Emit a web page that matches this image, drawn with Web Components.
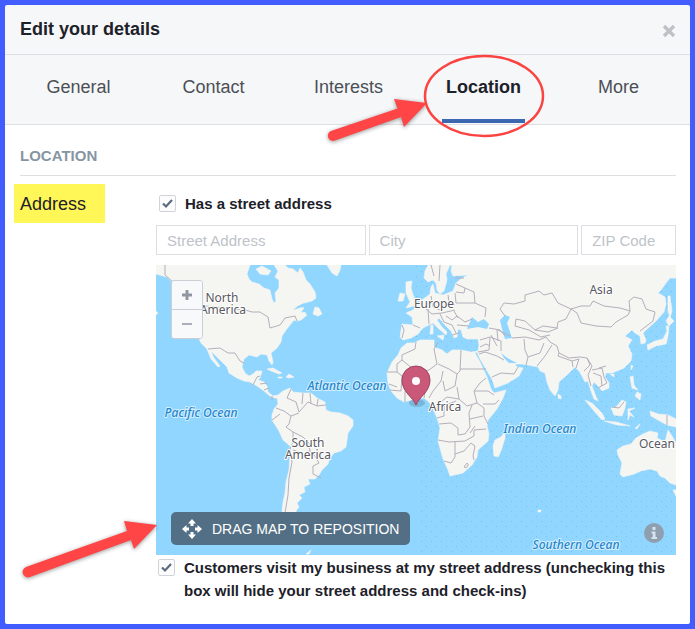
<!DOCTYPE html>
<html lang="en">
<head>
<meta charset="utf-8">
<title>Edit your details</title>
<style>
  html, body { height: 100%; }
  body { margin: 0; background: #425dff; font-family: "Liberation Sans", Arial, sans-serif; color: #1d2129; }
</style>
</head>
<body>
<details-dialog heading="Edit your details">
  <tab-bar slot="tabs">
    <tab-item>General</tab-item>
    <tab-item>Contact</tab-item>
    <tab-item>Interests</tab-item>
    <tab-item active>Location</tab-item>
    <tab-item>More</tab-item>
  </tab-bar>
  <form-section heading="LOCATION">
    <span slot="label">Address</span>
    <check-field>Has a street address</check-field>
    <address-fields></address-fields>
    <world-map></world-map>
    <check-field class="visit">Customers visit my business at my street address (unchecking this box will hide your street address and check-ins)</check-field>
  </form-section>
  <callout-marks slot="marks"></callout-marks>
</details-dialog>

<script>
const define = (name, markup, setup) => {
  const template = document.createElement('template');
  template.innerHTML = markup;
  customElements.define(name, class extends HTMLElement {
    constructor() {
      super();
      this.attachShadow({ mode: 'open' }).append(template.content.cloneNode(true));
    }
    connectedCallback() { if (setup) setup(this, this.shadowRoot); }
  });
};

define('details-dialog', `
<style>
  :host { display: flex; flex-direction: column; box-sizing: border-box; position: relative; min-height: 100%; padding: 5px; }
  header { display: flex; align-items: center; justify-content: space-between; box-sizing: border-box; height: 50px; padding: 0 14px 2px 15px; background: #f6f7f8; border-bottom: 1px solid #dddfe2; border-radius: 2px 2px 0 0; }
  h1 { margin: 0; font-size: 18px; line-height: 22px; font-weight: bold; color: #1d2129; }
  button { display: flex; border: 0; padding: 4px 0 0; background: none; }
  main { flex: 1; background: #fff; border-radius: 0 0 2px 2px; }
</style>
<header><h1></h1>
  <button type="button" aria-label="Close"><svg width="14" height="14" viewBox="0 0 14 14"><path d="M2 2L12 12M12 2L2 12" stroke="#bfc1c7" stroke-width="3.4"/></svg></button>
</header>
<slot name="tabs"></slot>
<main><slot></slot></main>
<slot name="marks"></slot>`,
(host, root) => { root.querySelector('h1').textContent = host.getAttribute('heading'); });

define('tab-bar', `
<style>
  :host { display: block; background: #f6f7f8; border-bottom: 1px solid #dddfe2; }
  nav { display: grid; grid-template-columns: repeat(5, 1fr); padding: 0 4px 0 6px; height: 69px; }
</style>
<nav><slot></slot></nav>`);

define('tab-item', `
<style>
  :host { display: flex; justify-content: center; }
  button { box-sizing: border-box; border: 0; border-bottom: 4px solid transparent; margin-bottom: 1px; padding: 0 4px; background: none; font: 18px/20px "Liberation Sans", Arial, sans-serif; color: #4b4f56; }
  :host([active]) button { border-color: #3b66b0; font-weight: bold; color: #1d2129; }
</style>
<button type="button"><slot></slot></button>`);

define('form-section', `
<style>
  :host { display: block; padding: 20px 14px 16px 9px; }
  h2 { margin: 0 0 8px 6px; padding-bottom: 8px; border-bottom: 1px solid #dddfe2; font-size: 15px; line-height: 22px; font-weight: bold; color: #8795a3; }
  .row { display: grid; grid-template-columns: 142px minmax(0, 1fr); align-items: start; }
  .name { justify-self: start; box-sizing: border-box; width: 91px; padding: 2px 6px 0; background: #fff657; font-size: 18px; line-height: 37px; }
</style>
<h2></h2>
<div class="row"><div class="name"><slot name="label"></slot></div><div><slot></slot></div></div>`,
(host, root) => { root.querySelector('h2').textContent = host.getAttribute('heading'); });

define('check-field', `
<style>
  :host { display: block; padding: 8px 0 10px; }
  :host(.visit) { padding: 1px 0 0; }
  label { display: flex; align-items: flex-start; gap: 9px; padding: 0 0 0 3px; font-size: 15px; line-height: 23px; font-weight: bold; color: #1d2129; }
  :host(.visit) label { padding-left: 2px; }
  input { appearance: none; flex: none; box-sizing: border-box; width: 17px; height: 17px; margin: 3px 0 0; border: 1px solid #d0d3d9; border-radius: 2px; background: #fcfcfd; }
  .box { display: grid; }
  .box > * { grid-area: 1 / 1; }
  svg { margin: 3px 0 0; display: block; pointer-events: none; z-index: 1; }
  input:not(:checked) + svg { visibility: hidden; }
</style>
<label><span class="box"><input type="checkbox" checked><svg width="17" height="17" viewBox="0 0 17 17"><path d="M4 8.5L7 11.5L13 5" fill="none" stroke="#5a6b7b" stroke-width="2.2"/></svg></span><span><slot></slot></span></label>`);

define('address-fields', `
<style>
  :host { display: grid; grid-template-columns: 210fr 210fr 95fr; gap: 3px; padding-bottom: 10px; }
  input { box-sizing: border-box; min-width: 0; width: 100%; height: 30px; border: 1px solid #dddfe2; border-radius: 0; padding: 0 10px; background: #fff; font: 15px "Liberation Sans", Arial, sans-serif; color: #1d2129; }
  input::placeholder { color: #bec3c9; opacity: 1; }
</style>
<input aria-label="Street Address" placeholder="Street Address">
<input aria-label="City" placeholder="City">
<input aria-label="ZIP Code" placeholder="ZIP Code">`);

define('world-map', `
<style>
  :host { display: block; position: relative; background: #91d6ff; }
  .map { display: block; width: 100%; height: auto; }
  .land { fill: #f5f5f2; stroke: #f5f5f2; stroke-width: .6; stroke-linejoin: round; }
  .sea { fill: #91d6ff; }
  .border { fill: none; stroke: #b5afbb; stroke-width: 1; stroke-linejoin: round; }
  text { text-anchor: middle; paint-order: stroke; stroke-linejoin: round; font-family: "Noto Sans", sans-serif; font-size: 12px; }
  .place { fill: #585860; stroke: #fff; stroke-width: 2px; }
  .ocean { fill: #2486cc; stroke: #d5efff; stroke-width: 2px; font-family: "Open Sans", "Noto Sans", sans-serif; font-style: italic; font-weight: 500; }
  .zoom { position: absolute; left: 15px; top: 15px; display: grid; width: 32px; box-sizing: border-box; border: 1px solid #cbced5; border-radius: 3px; overflow: hidden; }
  .zoom button { display: grid; place-items: center; height: 28px; border: 0; padding: 0; background: #f8f9fb; }
  .zoom button + button { box-sizing: content-box; border-top: 1px solid #cbced5; }
  .drag { position: absolute; left: 15px; bottom: 10px; display: flex; align-items: center; gap: 10px; height: 33px; border: 0; border-radius: 5px; padding: 0 11px; background: #526f85; font: 14px "Liberation Sans", Arial, sans-serif; color: #fff; white-space: nowrap; }
  .info { position: absolute; right: 12px; bottom: 12px; display: flex; border: 0; padding: 0; background: none; }
</style>
<svg class="map" viewBox="156 265 520 290" role="img" aria-label="World map">
  <defs><pattern id="dots" width="10" height="10" patternUnits="userSpaceOnUse"><rect x="1" y="1" width="1" height="1" fill="#76c0ee"/><rect x="6" y="6" width="1" height="1" fill="#76c0ee"/></pattern></defs>
  <rect class="sea" x="156" y="265" width="520" height="290"/>
  <path fill="url(#dots)" d="M412 265H676V555H418V405Z"/>
  <g class="land">
    <path d="M156 265H250L247 274 249 279 252 282 259 284 264 288 270 290 272 299 274 303 276 301 275 293 279 288 279 280 275 277 278 271 274 265H285L288 268 293 269 298 273 300 268 303 272 306 280 310 284 315 292 316 298 312 301 304 303 300 307 304 308 301 312 307 315 301 320 297 321 294 320 290 325 286 330 282 336 281 342 277 348 271 353 273 362 272 365 269 361 267 355 261 354 257 357 249 355 244 359 242 367 245 373 249 376 253 374 256 371 262 371 260 378 258 380 264 382 267 386 268 392 273 396 278 395 280 398 275 398 270 396 264 391 257 386 250 382 244 381 237 378 229 373 227 367 219 359 213 353 211 351 214 358 220 366 218 367 211 359 207 349 201 343 198 336 197 322 198 312 192 301 182 290 176 282 171 281 167 277 163 276 156 274Z"/>
    <path d="M313 314L315 307 319 308 322 314 318 316ZM303 312L306 313 302 318ZM327 265H341L340 270 337 276 332 273ZM256 269L262 266 271 271 268 275 260 274ZM267 369L273 368 282 373 279 374 271 371ZM286 377L289 374 294 377 289 378ZM278 377H282V378H278ZM156 311L158 313 156 315Z"/>
    <path d="M277 396L283 391 290 388 293 392 303 393 311 393 317 398 325 402 326 410 331 412 340 413 348 416 353 420 353 426 348 433 346 447 341 451 334 453 330 458 328 464 322 470 319 475 315 479 308 479 310 484 304 487 305 492 299 495 302 498 297 503 299 507 296 511 297 519 301 526 293 527 285 520 282 512 283 502 285 493 286 482 289 470 290 456 290 446 283 440 279 431 272 420 272 415 274 409 278 404Z"/>
    <path d="M428 265L425 271 424 278 428 282 433 280 436 283 437 290 440 294 444 291 446 284 447 279 446 274 450 265H676V278L670 278 666 283 661 290 658 293 665 297 666 304 664 312 656 321 646 330 643 333 646 340 645 343 641 344 640 336 635 333 632 330 625 336 632 340 628 346 632 354 631 361 624 368 617 371 612 373 606 373 605 377 609 383 609 388 602 391 599 387 594 382 592 386 595 394 598 401 594 399 591 391 588 381 585 382 582 376 579 371 575 367 568 374 559 382 558 390 555 396 550 390 547 382 545 373 540 371 538 367 528 365 522 364 515 364 517 367 523 368 519 376 508 383 495 388 492 379 487 371 480 359 477 352 475 353 480 362 487 377 491 389 494 393 506 390 503 398 497 409 488 420 487 426 489 434 488 441 478 450 477 457 472 465 463 473 450 476 448 470 443 459 438 441 440 428 437 418 433 409 429 402 424 398 415 399 404 402 397 398 391 391 388 383 387 373 392 362 398 355 401 348 407 343 414 343 420 340 434 340 434 347 442 350 447 354 452 350 461 350 471 352 478 351 479 345 478 339 467 339 463 337 461 330 458 329 457 337 454 338 451 331 445 325 439 318 437 320 442 327 447 332 446 335 439 329 433 323 423 328 418 334 411 338 403 340 400 337 402 324 413 325 412 317 406 313 413 310 419 302 426 297 430 294 431 287 433 284 435 293 443 295 453 291 456 283 462 278 468 275 453 276 451 271 452 265Z"/>
    <path d="M406 282L412 281 411 288 413 295 417 303 414 306 406 308 410 302 406 293ZM400 293L405 294 403 301 398 301ZM437 336L444 335 443 340ZM431 325H433V334H430Z"/>
    <path d="M505 432L505 438 501 451 498 457 494 456 493 446 495 440 501 437ZM558 394L561 396 561 399 558 398ZM617 450L623 446 631 444 636 438 643 434 650 431 658 433 657 438 665 442 668 430 672 436 676 443V485L670 483 665 478 660 476 657 471 650 469 641 471 634 474 623 477 620 474 622 463 618 455ZM673 490H676V496ZM650 411L658 414 668 415 676 419V427L667 425 658 420 651 416ZM585 400L592 403 602 413 605 419 602 420 594 411ZM604 421L616 422 630 426 617 425ZM611 408L616 407 622 400 626 402 625 408 622 416 614 415ZM628 409L635 408 629 411 634 417 630 415 628 420ZM630 377L633 376 634 385 638 390 632 388ZM637 392L641 394 640 400 635 396ZM631 365L633 366 631 370ZM610 374H614V377ZM647 345L655 341 663 339 667 331 666 326 669 326 668 336 666 344 656 346 648 350ZM666 321L669 316 674 321 669 326ZM668 296L670 296 672 311 670 318 668 311ZM635 428L640 424 637 429ZM538 510H541V512H538ZM311 550L306 554 309 554Z"/>
  </g>
  <path class="sea" d="M467 329L472 317 478 322 484 319 489 324 487 329 478 327ZM500 320L505 315 510 317 507 323 512 338 505 339 502 329ZM501 353L506 357 511 360 517 363 509 363 504 358ZM293 310L298 306 304 303 302 307Z"/>
  <g class="border">
    <path d="M165 265V275L172 281M196 305L245 310 252 312 260 312 268 317 270 328 280 325 285 318 295 316 297 321M208 349L220 348 228 353 235 353 240 361 244 363M253 385L257 377 260 376M260 384L267 383M264 390L269 388M272 396V400"/>
    <path d="M291 389L287 398 296 402 299 412M303 393L302 404M310 393L311 404M318 399L317 406M299 412L308 402 317 406 326 405M276 408L284 411 291 416 289 424 286 427 293 432 303 437M291 416L299 413M293 432L293 442 290 449 292 462 289 478 288 495 285 513M303 437L309 443 310 451 315 456 319 463 313 466 313 474 321 478M293 450L304 454 310 451M280 414L272 420"/>
    <path d="M431 265L434 276M440 265L439 281M455 278H464M456 284L465 288 464 293 456 292M465 288L474 292 475 303 486 308 485 317M455 293L456 303 465 303 475 303M448 295L449 303 455 305M431 296L433 307 440 310 448 305M418 303L426 309 432 314 442 313 455 310M428 309L429 324M402 325L404 330 402 338M413 325L420 328M440 314L444 322 452 325 456 333M446 316L452 320 457 316 465 322 472 319M454 311L458 318M457 325L469 326M459 333L452 335M489 328L500 330 505 336M480 340L490 337 501 341 501 351M480 347L486 344 490 346M479 354L485 352 497 356 504 360M490 338L489 350 478 352M497 330L498 341"/>
    <path d="M387 372H397V364L402 360 418 373 429 370 437 364 434 349M402 360V355L415 349 416 342M434 349L438 342M438 364L449 369 457 374 460 371 461 350M460 369H486M397 372L402 376 401 391 390 390M389 384L397 387M405 402L405 391 413 388 420 388V399M429 398L433 391 441 381 443 371M424 398L426 386 413 384 404 388M443 381L445 391 455 386 457 374M437 405L447 397 459 399 457 387M459 399L467 406 477 403 474 391 480 383 486 378M474 391L488 391 494 395M483 404L495 404 499 400M477 403L484 408 484 416 488 424M437 418L444 416 444 406 456 401M439 424L451 423 458 428 458 435 465 434 470 427 469 413 472 405M438 440L449 442 465 441 474 436 474 430 486 429M470 419L483 416M455 442V457L451 463 444 461M455 454L464 451 471 443 475 446 473 456 474 460M464 467A2 2 0 1 0 467 463ZM470 433L475 426"/>
    <path d="M505 316L500 309 504 303 514 304 525 301 525 295 539 291 544 295 552 293 558 303 571 309 566 319 558 322 557 328 543 326 535 330 525 321 516 319 515 326M571 309L581 306 590 306 593 301 604 306 620 308 630 311 628 315 616 322 611 327 596 326 581 323 577 313 571 309M630 311L629 301 634 297 642 299 646 309 655 312 653 321 640 331M515 326L529 330 541 337 550 335M535 330L548 332 558 328M512 338L525 337 539 340 546 337 550 342 557 346 559 353 569 358 580 357 587 358 590 365 584 371M524 339L525 350 528 357 526 365M528 357L540 353 544 343M537 366L545 356 552 345M559 353L558 356 572 361 573 367M572 361L579 359 576 368M587 358L592 366 588 375 591 386M592 370L602 368 604 377 607 383 598 388M593 373L601 376 602 386M599 368L606 366M492 377L501 373 514 374 518 367M498 330L510 336M491 335L497 346M612 407L619 408 624 402M667 415V425"/>
  </g>
  <g class="place"><text x="222" y="302">North</text><text x="223" y="314">America</text><text x="308" y="447">South</text><text x="308" y="459">America</text><text x="434" y="308">Europe</text><text x="601" y="294">Asia</text><text x="445" y="411">Africa</text><text x="657" y="448">Ocean</text></g>
  <g class="ocean"><text x="201" y="417">Pacific Ocean</text><text x="347" y="390">Atlantic Ocean</text><text x="540" y="433">Indian Ocean</text><text x="576" y="549">Southern Ocean</text></g>
  <ellipse cx="417" cy="403" rx="8" ry="4" fill="#4f7896" opacity=".35"/>
  <path d="M416 405C413 397 402 392 402 380A14 14 0 0 1 430 380C430 392 419 397 416 405Z" fill="#c95879" stroke="#9c4463" stroke-width="1"/>
  <circle cx="416" cy="381" r="4" fill="#fff"/>
</svg>
<div class="zoom">
  <button type="button" aria-label="Zoom in"><svg width="12" height="12"><path d="M6 1V11M1 6H11" stroke="#9096a2" stroke-width="3"/></svg></button>
  <button type="button" aria-label="Zoom out"><svg width="12" height="12"><path d="M1 6H11" stroke="#a9aeb8" stroke-width="2"/></svg></button>
</div>
<button class="drag" type="button"><svg width="20" height="20" viewBox="0 0 20 20" fill="#fff"><path d="M10 0L14 4.5H11.500V7H8.500V4.500H6Z"/><path d="M10 20L14 15.500H11.500V13H8.500V15.500H6ZM0 10L4.500 6V8.500H7V11.500H4.500V14ZM20 10L15.500 6V8.500H13V11.500H15.500V14Z"/></svg><span>DRAG MAP TO REPOSITION</span></button>
<button class="info" type="button" aria-label="Map information"><svg width="20" height="20" viewBox="0 0 20 20"><circle cx="10" cy="10" r="10" fill="#8f9fb0"/><path d="M8.500 4H11.500V7H8.500ZM7.500 8.500H11.500V14H13V16H7.500V14H8.800V10.500H7.500Z" fill="#d5e4ee"/></svg></button>`);

define('callout-marks', `
<style>
  :host { position: absolute; left: 0; top: 0; pointer-events: none; }
  svg { display: block; }
  .arrows { fill: #ff4545; filter: drop-shadow(0 1px 2px #0006); }
</style>
<svg width="695" height="629" viewBox="0 0 695 629" aria-hidden="true">
  <g class="arrows">
    <path d="M331 131L397.500 108.500 394 99 427 103 404 127 401 117 335 140.500A5 5 0 0 1 331 131Z"/>
    <path d="M26 567L127 531 124 521 157 525 134 549 131 540 30 577A5 5 0 0 1 26 567Z"/>
  </g>
  <ellipse cx="484" cy="96" rx="59" ry="40" fill="none" stroke="#fb4442" stroke-width="2.500"/>
</svg>`);
</script>
</body>
</html>
